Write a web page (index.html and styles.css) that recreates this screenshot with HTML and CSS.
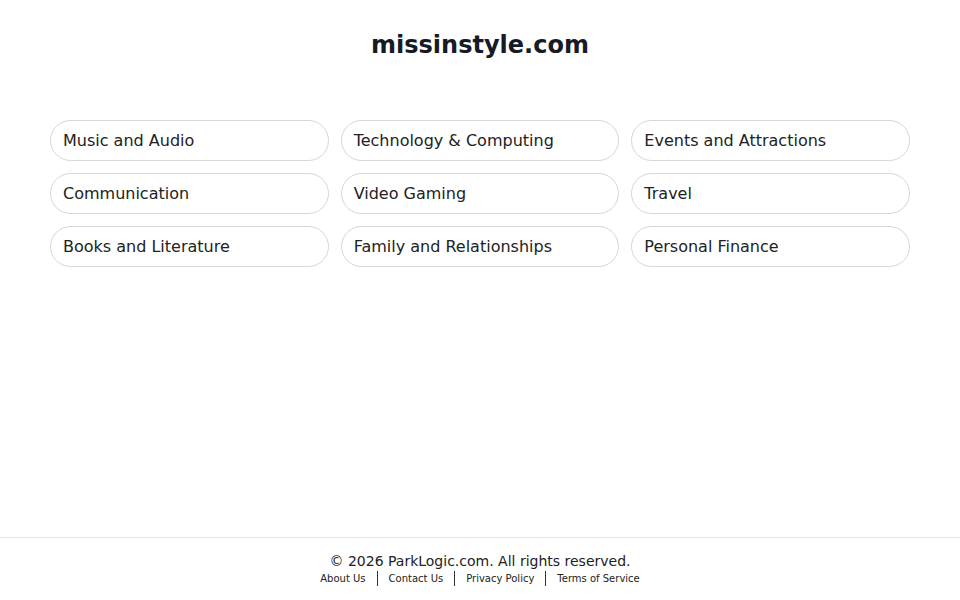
FILE: index.html
```html
<!DOCTYPE html>
<html lang="en">
<head>
<meta charset="utf-8">
<title>missinstyle.com</title>
<link rel="stylesheet" href="styles.css">
</head>
<body>
<div class="page">
  <header class="header">
    <h1 class="title">missinstyle.com</h1>
  </header>
  <main class="main">
    <div class="grid">
      <a class="pill" href="#">Music and Audio</a>
      <a class="pill" href="#">Technology &amp; Computing</a>
      <a class="pill" href="#">Events and Attractions</a>
      <a class="pill" href="#">Communication</a>
      <a class="pill" href="#">Video Gaming</a>
      <a class="pill" href="#">Travel</a>
      <a class="pill" href="#">Books and Literature</a>
      <a class="pill" href="#">Family and Relationships</a>
      <a class="pill" href="#">Personal Finance</a>
    </div>
  </main>
  <footer class="footer">
    <div class="copy">© 2026 ParkLogic.com. All rights reserved.</div>
    <nav class="links">
      <a href="#">About Us</a><span class="sep"></span><a href="#">Contact Us</a><span class="sep"></span><a href="#">Privacy Policy</a><span class="sep"></span><a href="#">Terms of Service</a>
    </nav>
  </footer>
</div>
</body>
</html>
```

FILE: styles.css
```css
* { box-sizing: border-box; }
html, body { margin: 0; padding: 0; background: #fff; }
body {
  font-family: "DejaVu Sans", sans-serif;
  color: #222;
}
.page {
  min-height: 100vh;
  display: flex;
  flex-direction: column;
}
.header {
  padding: 31px 0 0;
  text-align: center;
}
.title {
  margin: 0;
  font-size: 24px;
  line-height: 28px;
  font-weight: bold;
  color: #161b26;
}
.main {
  padding: 61px 50px 0;
}
.grid {
  display: grid;
  grid-template-columns: repeat(3, 1fr);
  column-gap: 12px;
  row-gap: 12px;
}
.pill {
  display: block;
  height: 41px;
  padding: 0 12px;
  border: 1px solid #d6d6d6;
  border-radius: 21px;
  font-size: 16px;
  line-height: 39px;
  color: #222;
  text-decoration: none;
  white-space: nowrap;
}
.footer {
  margin-top: auto;
  border-top: 1px solid #e6e6e6;
  padding: 15px 0 13px;
  text-align: center;
}
.copy {
  font-size: 14px;
  line-height: 17px;
  color: #222;
}
.links {
  display: flex;
  justify-content: center;
  align-items: center;
  height: 17px;
  margin-top: 0;
  font-size: 10px;
  line-height: 17px;
}
.links a {
  color: #222;
  text-decoration: none;
}
.sep {
  display: inline-block;
  width: 1px;
  height: 15px;
  margin: 0 11px;
  background: #333;
}
```
